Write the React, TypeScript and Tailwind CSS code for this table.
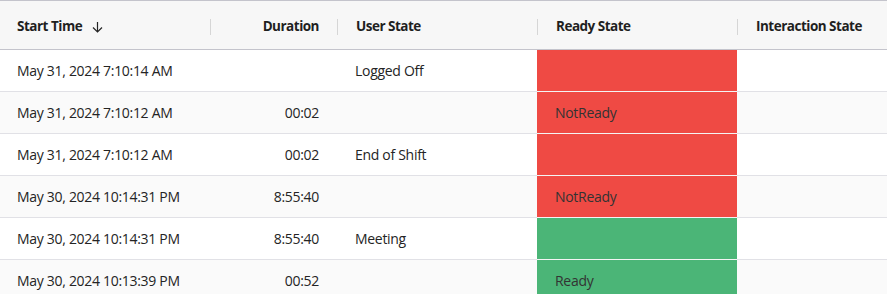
import React from "react";

type Row = {
  start: string;
  duration: string;
  user: string;
  ready: string;
  readyColor: "red" | "green";
  interaction: string;
};

const rows: Row[] = [
  { start: "May 31, 2024 7:10:14 AM", duration: "", user: "Logged Off", ready: "", readyColor: "red", interaction: "" },
  { start: "May 31, 2024 7:10:12 AM", duration: "00:02", user: "", ready: "NotReady", readyColor: "red", interaction: "" },
  { start: "May 31, 2024 7:10:12 AM", duration: "00:02", user: "End of Shift", ready: "", readyColor: "red", interaction: "" },
  { start: "May 30, 2024 10:14:31 PM", duration: "8:55:40", user: "", ready: "NotReady", readyColor: "red", interaction: "" },
  { start: "May 30, 2024 10:14:31 PM", duration: "8:55:40", user: "Meeting", ready: "", readyColor: "green", interaction: "" },
  { start: "May 30, 2024 10:13:39 PM", duration: "00:52", user: "", ready: "Ready", readyColor: "green", interaction: "" },
];

function Sep() {
  return <div className="h-4 w-px shrink-0 bg-[#d6d6d6]" />;
}

export default function App() {
  return (
    <div
      className="w-[887px] h-[294px] overflow-hidden bg-white text-[14px] tracking-[-0.3px] text-[#242424]"
      style={{ fontFamily: '"Open Sans", "Noto Sans", sans-serif' }}
    >
      <div className="grid grid-cols-[210px_127px_200px_200px_1fr] h-[50px] bg-[#f7f7f7] border-t border-b border-[#c4c4cc] font-bold text-[13.5px] tracking-[-0.5px] text-[#1f1f1f]">
        <div className="flex items-center pl-[17px] pt-[3px]">
          <span>Start Time</span>
          <svg className="ml-[10px]" width="11" height="12" viewBox="0 0 11 12" fill="none">
            <path d="M5.5 1 V11 M1 6.5 L5.5 11 L10 6.5" stroke="#242424" strokeWidth="1.2" />
          </svg>
        </div>
        <div className="flex items-center pt-[3px]">
          <Sep />
          <span className="flex-1 text-right pr-[18px]">Duration</span>
        </div>
        <div className="flex items-center pt-[3px]">
          <Sep />
          <span className="pl-[18px]">User State</span>
        </div>
        <div className="flex items-center pt-[3px]">
          <Sep />
          <span className="pl-[18px]">Ready State</span>
        </div>
        <div className="flex items-center pt-[3px]">
          <Sep />
          <span className="pl-[18px]">Interaction State</span>
        </div>
      </div>
      {rows.map((r, i) => (
        <div
          key={i}
          className={`grid grid-cols-[210px_127px_200px_200px_1fr] h-[42px] border-b border-[#e1e1e6] ${
            i % 2 === 1 ? "bg-[#fafafa]" : "bg-white"
          }`}
        >
          <div className="flex items-center pl-[17px]">{r.start}</div>
          <div className="flex items-center justify-end pr-[18px]">{r.duration}</div>
          <div className="flex items-center pl-[18px]">{r.user}</div>
          <div
            className={`flex items-center pl-[18px] -mb-px border-b border-[#f4f4f4] text-[#333333] ${
              r.readyColor === "red" ? "bg-[#ef4a44]" : "bg-[#4bb577]"
            }`}
          >
            {r.ready}
          </div>
          <div className="flex items-center pl-[18px]">{r.interaction}</div>
        </div>
      ))}
    </div>
  );
}
